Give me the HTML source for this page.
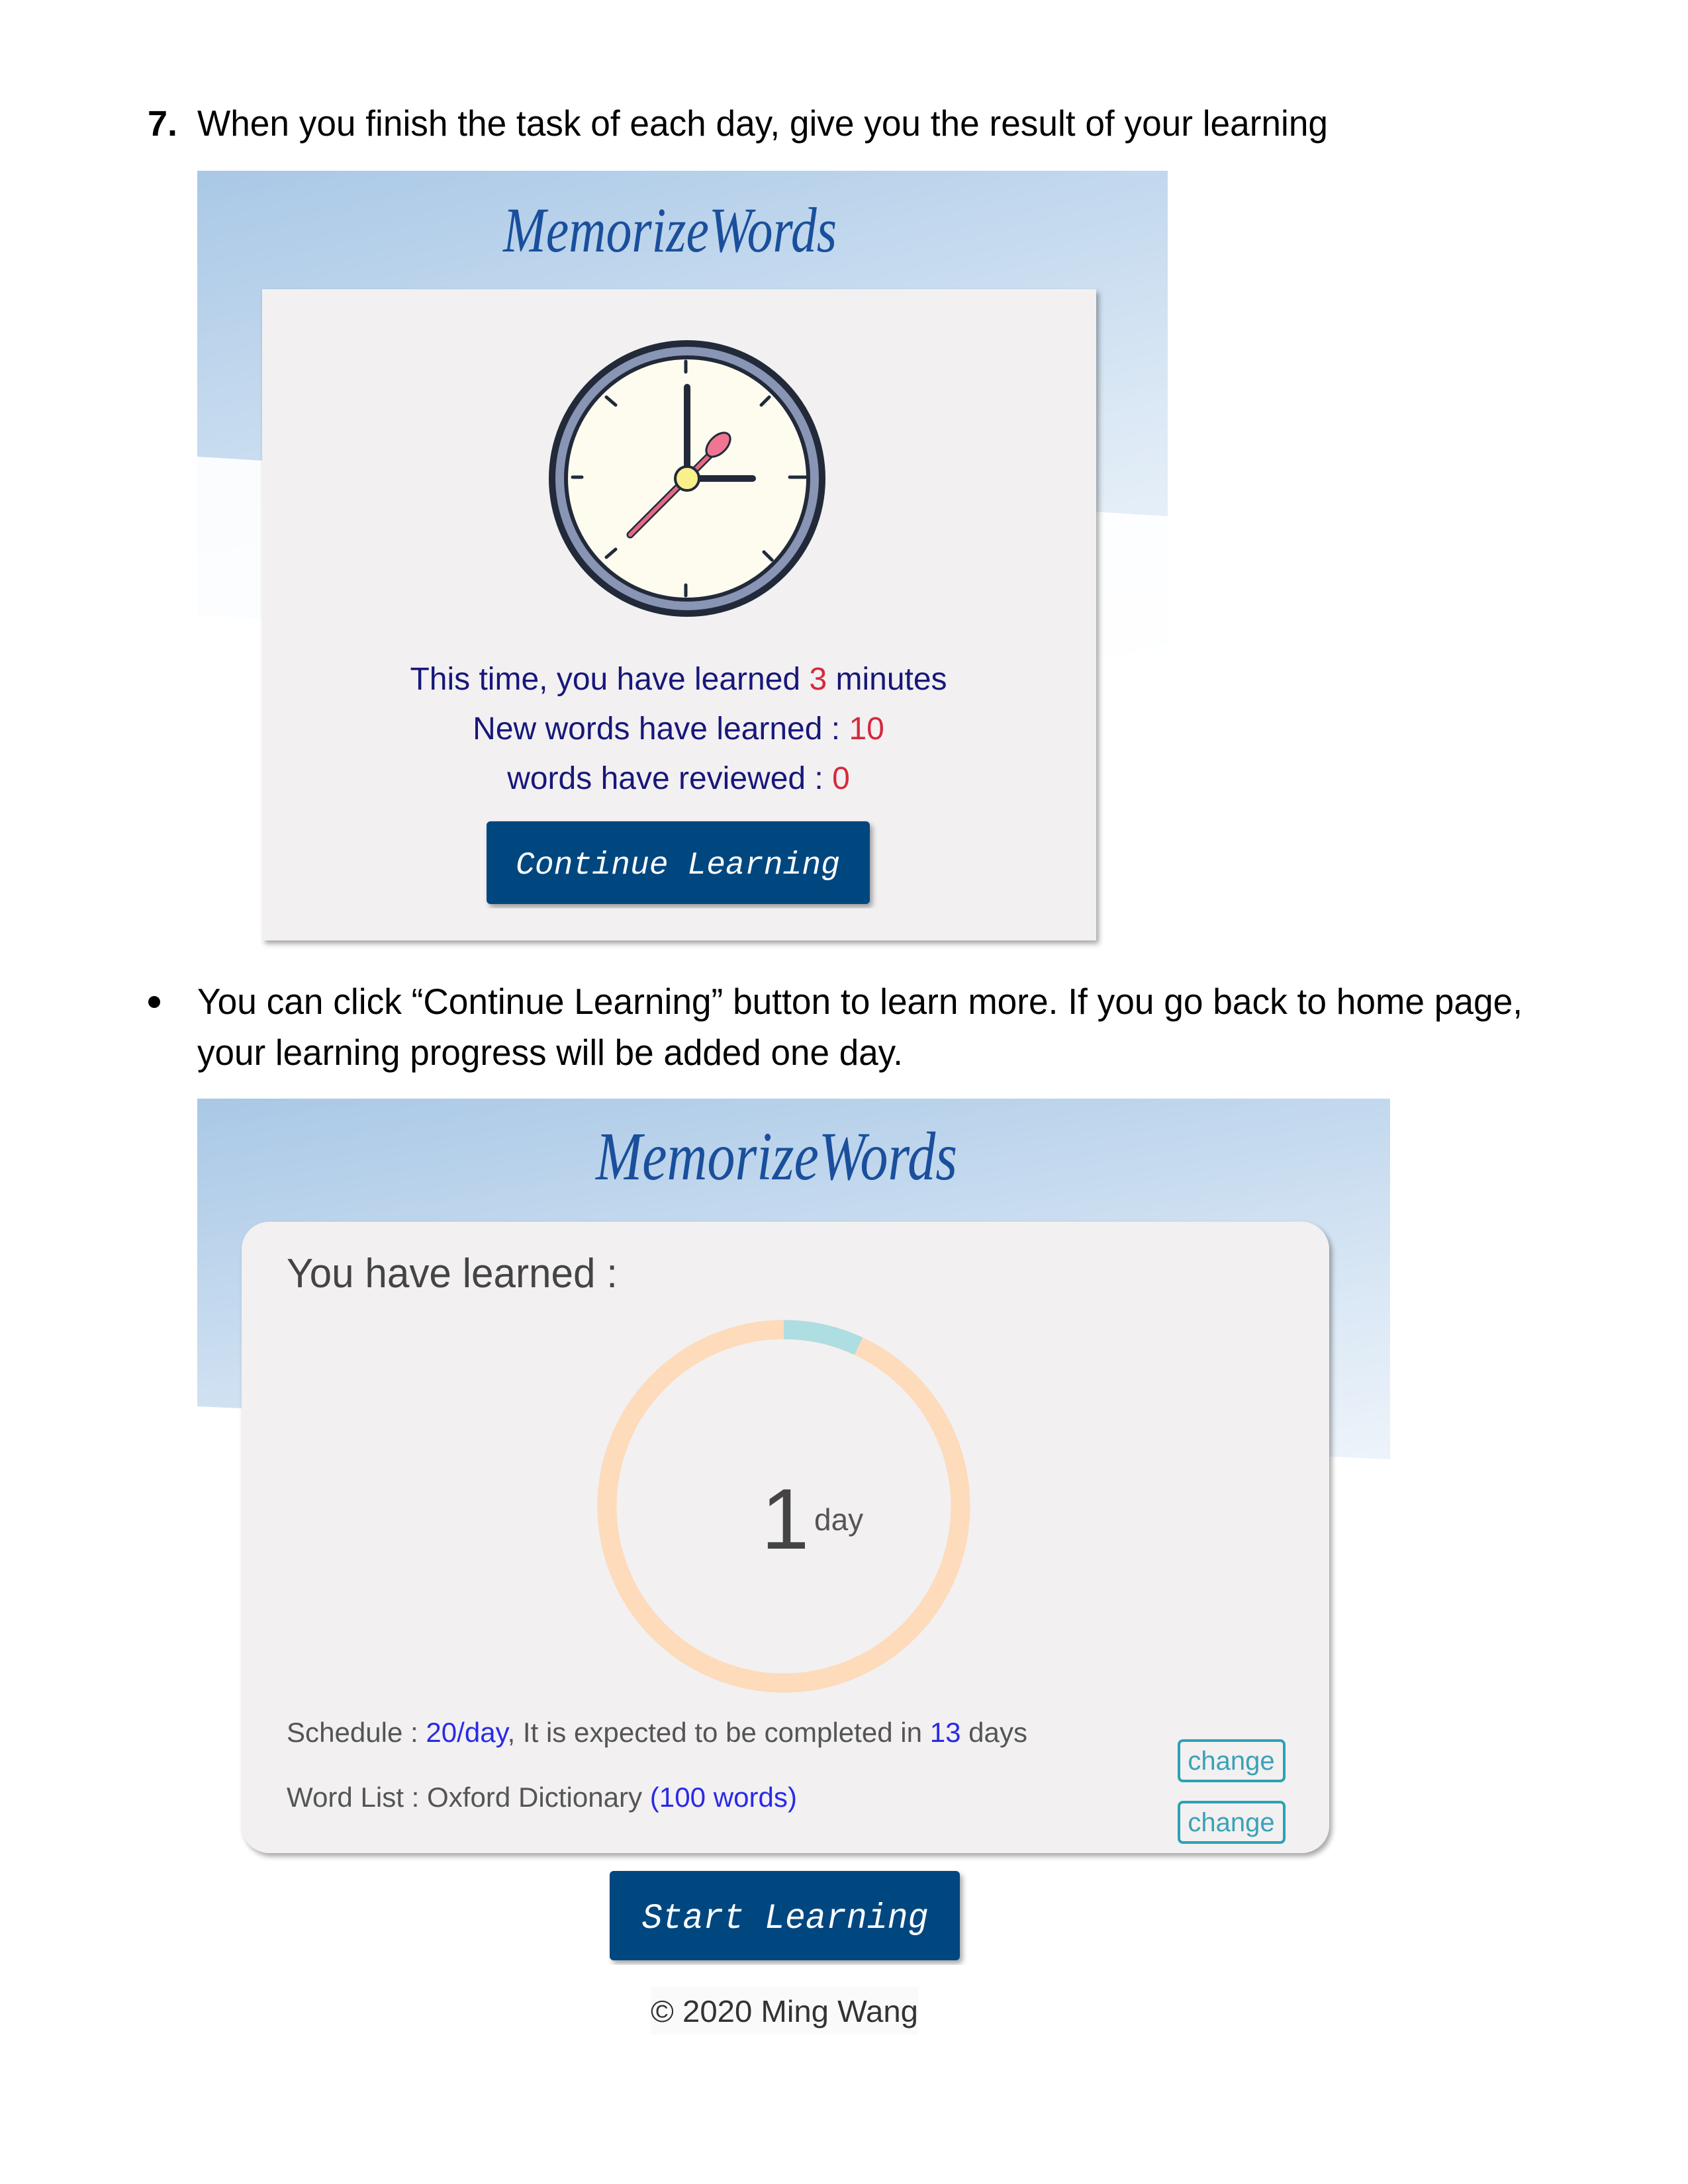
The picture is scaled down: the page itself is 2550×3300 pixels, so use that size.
<!DOCTYPE html>
<html><head><meta charset="utf-8"><style>
html,body{margin:0;padding:0;background:#fff;}
svg{display:block}
</style></head><body>
<svg width="2550" height="3300" viewBox="0 0 2550 3300" xmlns="http://www.w3.org/2000/svg">
<defs>
<linearGradient id="g1" x1="0" y1="0" x2="0.3" y2="1">
<stop offset="0" stop-color="#a9c8e6"/><stop offset="0.55" stop-color="#dbe8f5"/><stop offset="1" stop-color="#ffffff"/>
</linearGradient>
<filter id="sh" x="-5%" y="-5%" width="110%" height="110%"><feDropShadow dx="4" dy="5" stdDeviation="4" flood-color="#000" flood-opacity="0.35"/></filter>
</defs>
<rect width="2550" height="3300" fill="#fff"/>

<!-- heading -->
<text x="223" y="205" font-family="Liberation Sans, sans-serif" font-size="54" font-weight="bold" fill="#000">7.</text>
<text x="298" y="205" font-family="Liberation Sans, sans-serif" font-size="55" fill="#000" textLength="1708" lengthAdjust="spacingAndGlyphs">When you finish the task of each day, give you the result of your learning</text>

<!-- screenshot 1 -->
<rect x="298" y="258" width="1466" height="1170" fill="url(#g1)"/>
<polygon points="298,690 1764,780 1764,1430 298,1430" fill="#ffffff" opacity="0.9"/>
<polygon points="298,930 1764,1000 1764,1430 298,1430" fill="#fff"/>
<text x="1012" y="380" text-anchor="middle" font-family="Liberation Serif, serif" font-style="italic" font-size="96" fill="#1a4f9c" textLength="504" lengthAdjust="spacingAndGlyphs">MemorizeWords</text>
<rect x="396" y="437" width="1260" height="984" fill="#f2f0f1" filter="url(#sh)"/>
<!-- clock -->
<circle cx="1038" cy="723" r="209" fill="#222a3a"/>
<circle cx="1038" cy="723" r="199" fill="#8995b4"/>
<circle cx="1038" cy="723" r="186" fill="#222a3a"/>
<circle cx="1038" cy="723" r="180" fill="#fdfcee"/>
<g stroke="#222a3a" stroke-width="5" stroke-linecap="round">
<line x1="1036" y1="546" x2="1036" y2="562"/>
<line x1="1036" y1="884" x2="1036" y2="900"/>
<line x1="865" y1="721" x2="879" y2="721"/>
<line x1="1193" y1="721" x2="1217" y2="721"/>
<line x1="916" y1="600" x2="930" y2="612"/>
<line x1="1150" y1="612" x2="1162" y2="600"/>
<line x1="916" y1="842" x2="930" y2="830"/>
<line x1="1154" y1="834" x2="1166" y2="846"/>
</g>
<line x1="1038" y1="723" x2="1038" y2="585" stroke="#222a3a" stroke-width="10" stroke-linecap="round"/>
<line x1="1038" y1="723" x2="1137" y2="723" stroke="#222a3a" stroke-width="10" stroke-linecap="round"/>
<line x1="952" y1="808" x2="1075" y2="685" stroke="#222a3a" stroke-width="11" stroke-linecap="round"/>
<line x1="952" y1="808" x2="1075" y2="685" stroke="#e06a85" stroke-width="6" stroke-linecap="round"/>
<ellipse cx="1085" cy="672" rx="13" ry="22" transform="rotate(45 1085 672)" fill="#f07592" stroke="#222a3a" stroke-width="3"/>
<circle cx="1038" cy="723" r="18" fill="#f8f08a" stroke="#222a3a" stroke-width="4"/>
<!-- texts -->
<g font-family="Liberation Sans, sans-serif" font-size="48" text-anchor="middle">
<text x="1025" y="1042" fill="#17177a">This time, you have learned <tspan fill="#d42a3c">3</tspan> minutes</text>
<text x="1025" y="1117" fill="#17177a">New words have learned : <tspan fill="#d42a3c">10</tspan></text>
<text x="1025" y="1192" fill="#17177a">words have reviewed : <tspan fill="#d42a3c">0</tspan></text>
</g>
<rect x="735" y="1241" width="579" height="125" rx="6" fill="#004680" filter="url(#sh)"/>
<text x="1024" y="1320" text-anchor="middle" font-family="Liberation Mono, monospace" font-style="italic" font-size="48" fill="#fff" textLength="490" lengthAdjust="spacingAndGlyphs">Continue Learning</text>

<!-- bullet -->
<circle cx="233" cy="1514" r="9" fill="#000"/>
<text x="298" y="1532" font-family="Liberation Sans, sans-serif" font-size="55" fill="#000" textLength="2002" lengthAdjust="spacingAndGlyphs">You can click “Continue Learning” button to learn more. If you go back to home page,</text>
<text x="298" y="1609" font-family="Liberation Sans, sans-serif" font-size="55" fill="#000" textLength="1066" lengthAdjust="spacingAndGlyphs">your learning progress will be added one day.</text>

<!-- screenshot 2 -->
<rect x="298" y="1660" width="1802" height="1000" fill="url(#g1)"/>
<polygon points="298,2125 2100,2205 2100,2700 298,2700" fill="#fff"/>
<text x="1173" y="1782" text-anchor="middle" font-family="Liberation Serif, serif" font-style="italic" font-size="104" fill="#1a4f9c" textLength="546" lengthAdjust="spacingAndGlyphs">MemorizeWords</text>
<rect x="365" y="1846" width="1643" height="954" rx="42" fill="#f2f0f1" filter="url(#sh)"/>
<text x="433" y="1945" font-family="Liberation Sans, sans-serif" font-size="62" fill="#444" textLength="500" lengthAdjust="spacingAndGlyphs">You have learned :</text>
<circle cx="1184" cy="2276" r="267" fill="none" stroke="#fddbbb" stroke-width="29"/>
<path d="M1184 2009 A267 267 0 0 1 1297 2034" fill="none" stroke="#aedde2" stroke-width="29"/>
<text x="1150" y="2340" font-family="Liberation Sans, sans-serif" font-size="130" fill="#444">1</text>
<text x="1230" y="2312" font-family="Liberation Sans, sans-serif" font-size="46" fill="#555">day</text>
<g font-family="Liberation Sans, sans-serif" font-size="42" fill="#555">
<text x="433" y="2632" textLength="1119" lengthAdjust="spacingAndGlyphs">Schedule : <tspan fill="#2a2ae6">20/day</tspan>, It is expected to be completed in <tspan fill="#2a2ae6">13</tspan> days</text>
<text x="433" y="2730" textLength="771" lengthAdjust="spacingAndGlyphs">Word List : Oxford Dictionary <tspan fill="#2a2ae6">(100 words)</tspan></text>
</g>
<rect x="1781" y="2630" width="159" height="61" rx="6" fill="none" stroke="#2aa3b5" stroke-width="4"/>
<rect x="1781" y="2723" width="159" height="61" rx="6" fill="none" stroke="#2aa3b5" stroke-width="4"/>
<g font-family="Liberation Sans, sans-serif" font-size="40" fill="#3aa2b6" text-anchor="middle">
<text x="1860" y="2674">change</text>
<text x="1860" y="2767">change</text>
</g>
<rect x="921" y="2827" width="529" height="135" rx="6" fill="#004680" filter="url(#sh)"/>
<text x="1186" y="2913" text-anchor="middle" font-family="Liberation Mono, monospace" font-style="italic" font-size="54" fill="#fff" textLength="433" lengthAdjust="spacingAndGlyphs">Start Learning</text>
<rect x="983" y="3002" width="404" height="72" fill="#fafafa"/>
<text x="1185" y="3055" text-anchor="middle" font-family="Liberation Sans, sans-serif" font-size="46" fill="#333" textLength="404" lengthAdjust="spacingAndGlyphs">© 2020 Ming Wang</text>
</svg>
</body></html>
